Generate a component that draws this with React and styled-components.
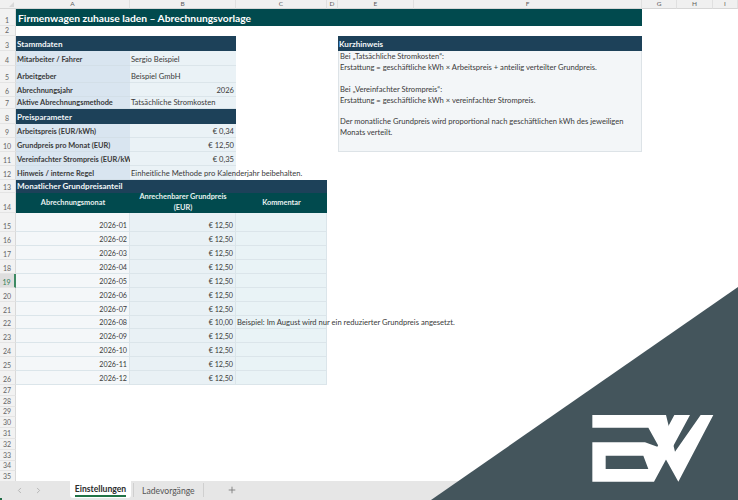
import { Fragment } from 'react';
import styled, { createGlobalStyle } from 'styled-components';
import { ChevronLeft, ChevronRight, Plus } from 'lucide-react';

const GlobalStyle = createGlobalStyle`
  html, body {
    margin: 0;
    padding: 0;
    background: #fff;
    overflow: hidden;
  }
  * {
    box-sizing: border-box;
  }
`;

const columns = [
  ['A', 114],
  ['B', 106],
  ['C', 91],
  ['D', 11],
  ['E', 76],
  ['F', 228],
  ['G', 35],
  ['H', 36],
  ['I', 25],
];

const rowHeights = [
  17, 10, 15, 15, 17, 14, 12, 15, 14, 14, 14, 13.5, 13.5, 19.5, 19, 14, 14, 14, 14, 14, 14, 13, 14.5, 14, 14, 14,
  10.8, 10.8, 10.8, 10.8, 10.8, 10.8, 10.8, 10.9, 10.9,
];

const months = [
  ['2026-01', '€ 12,50'],
  ['2026-02', '€ 12,50'],
  ['2026-03', '€ 12,50'],
  ['2026-04', '€ 12,50'],
  ['2026-05', '€ 12,50'],
  ['2026-06', '€ 12,50'],
  ['2026-07', '€ 12,50'],
  ['2026-08', '€ 10,00', 'Beispiel: Im August wird nur ein reduzierter Grundpreis angesetzt.'],
  ['2026-09', '€ 12,50'],
  ['2026-10', '€ 12,50'],
  ['2026-11', '€ 12,50'],
  ['2026-12', '€ 12,50'],
];

const Page = styled.div`
  width: 738px;
  height: 500px;
  position: relative;
  overflow: hidden;
  display: flex;
  flex-direction: column;
  font-family: Lato, 'Liberation Sans', sans-serif;
  color: #3a3a3a;
`;

const Sheet = styled.div`
  flex: 1;
  display: grid;
  grid-template-columns: 16px ${columns.map(c => c[1] + 'px').join(' ')};
  grid-template-rows: 9px ${rowHeights.map(h => h + 'px').join(' ')};
  overflow: hidden;
  font-size: 7.6px;
`;

const Corner = styled.div`
  grid-row: 1;
  grid-column: 1;
  background: #f0f0f0;
  border-bottom: 1px solid #d6d6d6;
  position: relative;
  &::after {
    content: '';
    position: absolute;
    right: 2px;
    bottom: 1px;
    border-left: 5px solid transparent;
    border-bottom: 5px solid #d8d8d8;
  }
`;

const ColHead = styled.div`
  grid-row: 1;
  grid-column: ${p => p.$col};
  background: #f0f0f0;
  border-bottom: 1px solid #d6d6d6;
  border-right: 1px solid #e0e0e0;
  color: #5c5c5c;
  font-size: 6.5px;
  line-height: 8px;
  text-align: center;
`;

const RowHead = styled.div`
  grid-row: ${p => p.$row};
  grid-column: 1;
  background: ${p => (p.$active ? '#dedede' : '#f2f2f2')};
  border-bottom: 1px solid #e4e4e4;
  border-right: ${p => (p.$active ? '2px solid #3d8a63' : '1px solid #d9d9d9')};
  color: ${p => (p.$active ? '#2f7d55' : '#666')};
  font-size: 7px;
  display: flex;
  align-items: flex-end;
  justify-content: center;
  padding: 0 1px 1px 0;
`;

const Title = styled.div`
  grid-row: 2;
  grid-column: 2 / 8;
  background: #014a4e;
  color: #fff;
  font-size: 10.25px;
  font-weight: 700;
  padding-left: 2px;
  display: flex;
  align-items: center;
`;

const Section = styled.div`
  grid-row: ${p => p.$row};
  grid-column: ${p => p.$col};
  background: #1d4159;
  color: #f2f6f8;
  font-size: 8.1px;
  font-weight: 700;
  padding-left: 1px;
  display: flex;
  align-items: center;
`;

const Label = styled.div`
  grid-row: ${p => p.$row};
  grid-column: 2;
  background: #d9e5f0;
  border-bottom: 1px solid #d3dfe8;
  font-size: 7.4px;
  font-weight: 700;
  padding: 0 0 1px 1px;
  white-space: nowrap;
  overflow: hidden;
  display: flex;
  align-items: flex-end;
`;

const Value = styled.div`
  grid-row: ${p => p.$row};
  grid-column: 3;
  background: #eaf2f6;
  border-bottom: 1px solid #dbe5ea;
  padding: 0 2px 1px 1px;
  white-space: nowrap;
  display: flex;
  align-items: flex-end;
  justify-content: ${p => (p.$right ? 'flex-end' : 'flex-start')};
`;

const TableHead = styled.div`
  grid-row: 15;
  grid-column: ${p => p.$col};
  background: #014a4e;
  color: #e8f0f0;
  font-size: 7.4px;
  font-weight: 700;
  text-align: center;
  line-height: 10.5px;
  padding: 0 8px;
  overflow: hidden;
  display: flex;
  align-items: center;
  justify-content: center;
`;

const MonthCell = styled.div`
  grid-row: ${p => p.$row};
  grid-column: 2;
  background: #f4f7f9;
  border-bottom: 1px solid #dbe5ea;
  border-right: 1px solid #dbe5ea;
  font-size: 7.2px;
  padding-right: 2px;
  padding-bottom: 1px;
  display: flex;
  align-items: flex-end;
  justify-content: flex-end;
`;

const PriceCell = styled(MonthCell)`
  grid-column: 3;
  background: #e9f1f5;
`;

const CommentCell = styled.div`
  grid-row: ${p => p.$row};
  grid-column: 4;
  background: #e9f3f6;
  border-bottom: 1px solid #dbe5ea;
  border-right: 1px solid #dbe5ea;
  padding-left: 1px;
  padding-bottom: 1px;
  white-space: nowrap;
  display: flex;
  align-items: flex-end;
`;

const Note = styled.div`
  grid-row: 5 / 12;
  grid-column: 6 / 8;
  background: #f3f6f8;
  border: 1px solid #dde3e7;
  border-top: none;
  padding: 0 1px;
  line-height: 10.9px;
`;

const NoteLine = styled.div`
  min-height: 10.9px;
  white-space: nowrap;
`;

const TabBar = styled.div`
  height: 19px;
  flex-shrink: 0;
  position: relative;
  background: #e6e6e6;
  display: flex;
  align-items: flex-start;
  color: #7a7a7a;
  font-size: 8.6px;
  padding-left: 10px;
  &::before {
    content: '';
    position: absolute;
    left: 0;
    bottom: 0;
    width: 2px;
    height: 2px;
    background: #1e6b45;
  }
`;

const NavButton = styled.div`
  width: 19px;
  height: 18px;
  color: #a5a5a5;
  display: flex;
  align-items: center;
  justify-content: center;
`;

const ActiveTab = styled.div`
  margin-left: 22px;
  width: 61px;
  height: 17px;
  background: #fff;
  border-radius: 0 0 3px 3px;
  color: #2c2c2c;
  font-weight: 700;
  text-align: center;
  line-height: 16px;
  position: relative;
  &::after {
    content: '';
    position: absolute;
    left: 5px;
    right: 5px;
    bottom: 1.5px;
    height: 1.5px;
    background: #217346;
  }
`;

const Tab = styled.div`
  margin-left: 2px;
  width: 71px;
  height: 14px;
  margin-top: 2px;
  border-left: 1px solid #cfcfcf;
  border-right: 1px solid #cfcfcf;
  color: #555;
  line-height: 17px;
  padding-left: 8px;
`;

const AddButton = styled.div`
  margin-left: 23px;
  height: 18px;
  color: #777;
  display: flex;
  align-items: center;
`;

const Overlay = styled.div`
  position: absolute;
  left: 0;
  top: 0;
  width: 738px;
  height: 500px;
  background: #44555c;
  clip-path: polygon(738px 287px, 738px 500px, 431px 500px);
`;

const Logo = styled.svg`
  position: absolute;
  left: 580px;
  top: 400px;
  width: 140px;
  height: 85px;
`;

function App() {
  return (
    <Page>
      <GlobalStyle />
      <Sheet>
        <Corner />
        {columns.map(([name], i) => (
          <ColHead key={name} $col={i + 2}>{name}</ColHead>
        ))}
        {rowHeights.map((_, i) => (
          <RowHead key={i} $row={i + 2} $active={i + 1 === 19}>{i + 1}</RowHead>
        ))}

        <Title>Firmenwagen zuhause laden – Abrechnungsvorlage</Title>

        <Section $row={4} $col="2 / 4">Stammdaten</Section>
        <Label $row={5}>Mitarbeiter / Fahrer</Label>
        <Value $row={5}>Sergio Beispiel</Value>
        <Label $row={6}>Arbeitgeber</Label>
        <Value $row={6}>Beispiel GmbH</Value>
        <Label $row={7}>Abrechnungsjahr</Label>
        <Value $row={7} $right>2026</Value>
        <Label $row={8}>Aktive Abrechnungsmethode</Label>
        <Value $row={8}>Tatsächliche Stromkosten</Value>

        <Section $row={9} $col="2 / 4">Preisparameter</Section>
        <Label $row={10}>Arbeitspreis (EUR/kWh)</Label>
        <Value $row={10} $right>€ 0,34</Value>
        <Label $row={11}>Grundpreis pro Monat (EUR)</Label>
        <Value $row={11} $right>€ 12,50</Value>
        <Label $row={12}>Vereinfachter Strompreis (EUR/kWh)</Label>
        <Value $row={12} $right>€ 0,35</Value>
        <Label $row={13}>Hinweis / interne Regel</Label>
        <Value $row={13}>Einheitliche Methode pro Kalenderjahr beibehalten.</Value>

        <Section $row={14} $col="2 / 5">Monatlicher Grundpreisanteil</Section>
        <TableHead $col={2}>Abrechnungsmonat</TableHead>
        <TableHead $col={3}>Anrechenbarer Grundpreis (EUR)</TableHead>
        <TableHead $col={4}>Kommentar</TableHead>
        {months.map(([month, price, comment], i) => (
          <Fragment key={month}>
            <MonthCell $row={i + 16}>{month}</MonthCell>
            <PriceCell $row={i + 16}>{price}</PriceCell>
            <CommentCell $row={i + 16}>{comment}</CommentCell>
          </Fragment>
        ))}

        <Section $row={4} $col="6 / 8">Kurzhinweis</Section>
        <Note>
          <NoteLine>Bei „Tatsächliche Stromkosten“:</NoteLine>
          <NoteLine>Erstattung = geschäftliche kWh × Arbeitspreis + anteilig verteilter Grundpreis.</NoteLine>
          <NoteLine />
          <NoteLine>Bei „Vereinfachter Strompreis“:</NoteLine>
          <NoteLine>Erstattung = geschäftliche kWh × vereinfachter Strompreis.</NoteLine>
          <NoteLine />
          <NoteLine>Der monatliche Grundpreis wird proportional nach geschäftlichen kWh des jeweiligen</NoteLine>
          <NoteLine>Monats verteilt.</NoteLine>
        </Note>
      </Sheet>

      <TabBar>
        <NavButton><ChevronLeft size={9} /></NavButton>
        <NavButton><ChevronRight size={9} /></NavButton>
        <ActiveTab>Einstellungen</ActiveTab>
        <Tab>Ladevorgänge</Tab>
        <AddButton><Plus size={10} /></AddButton>
      </TabBar>

      <Overlay>
        <Logo viewBox="0 0 420 255">
          <path
            fill="#fff"
            d="M37 45H258L285 155L362 45H400L295 245L205 83H37Z"
          />
          <path
            fill="#fff"
            fillRule="evenodd"
            d="M283 45H330L222 245H37V127H195L232 140ZM77 167V207H205L190 167Z"
          />
        </Logo>
      </Overlay>
    </Page>
  );
}

export default App;
